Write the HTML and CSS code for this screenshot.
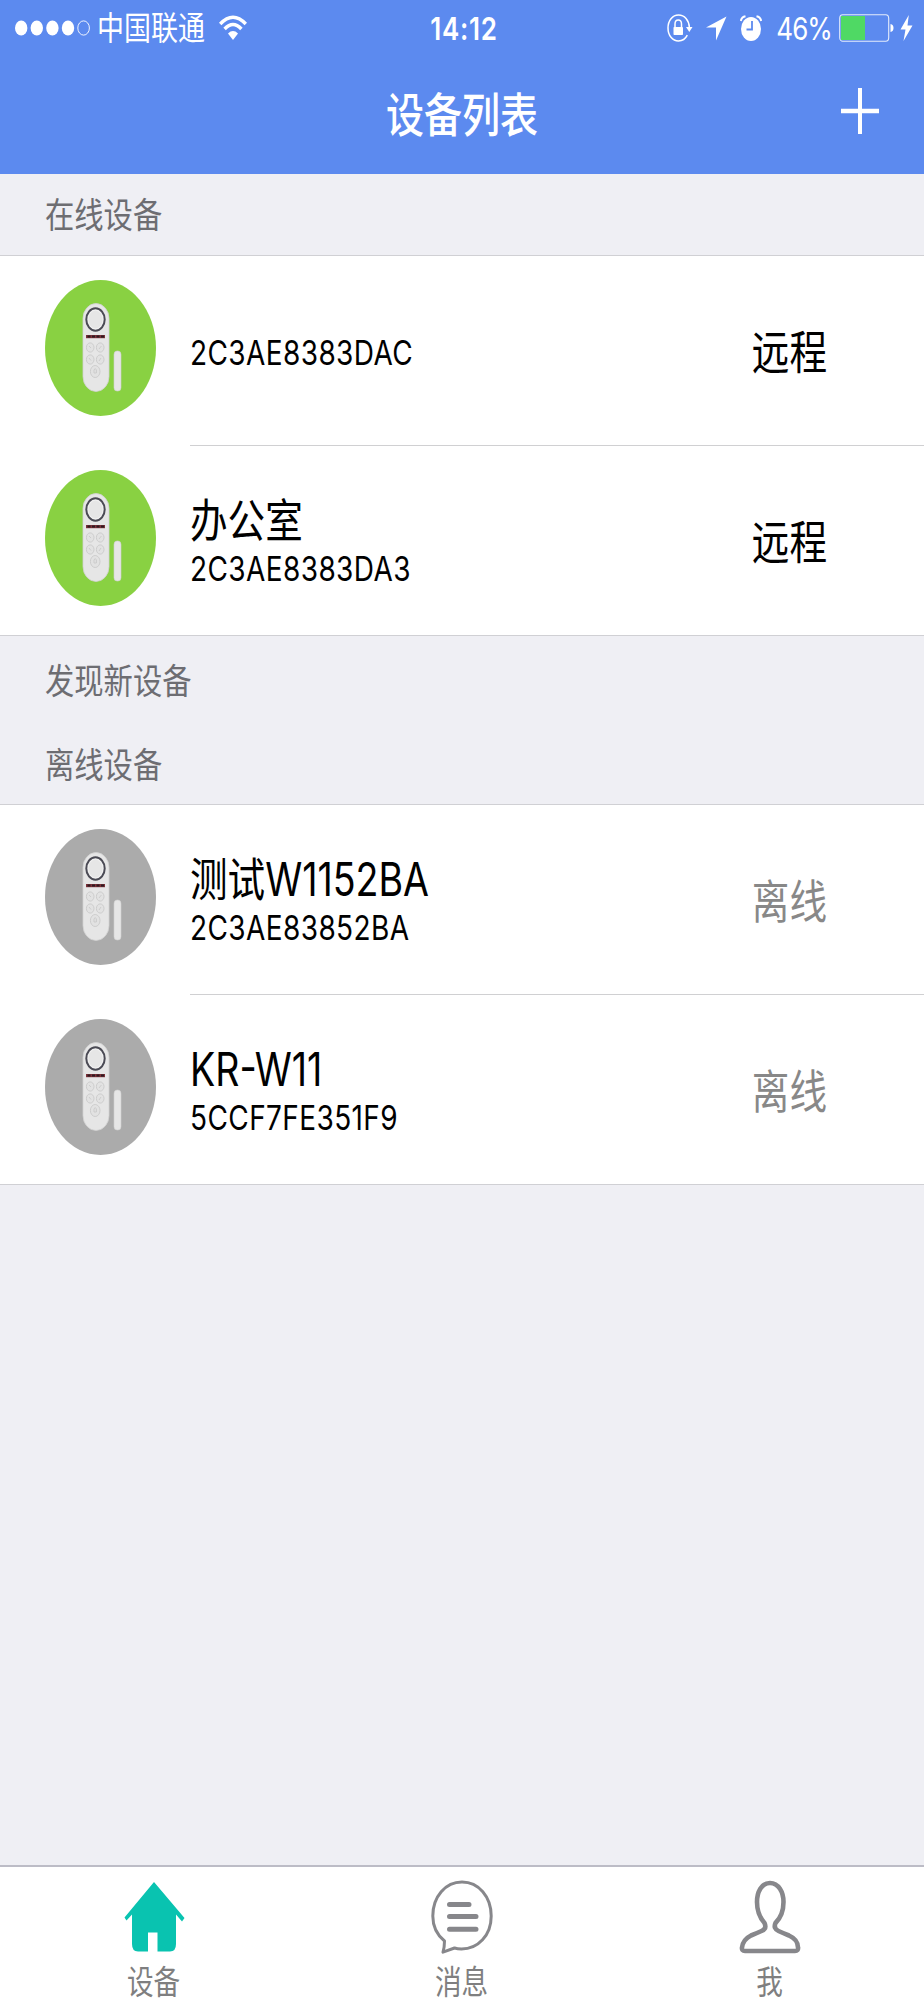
FILE: index.html
```html
<!DOCTYPE html>
<html lang="zh-CN">

<head>
  <meta charset="UTF-8">
  <meta name="viewport" content="width=device-width, initial-scale=1.0">
  <title>设备列表</title>
  <link rel="stylesheet" href="styles.css">
</head>

<body>
  <!-- device picture, used by every row -->
  <svg class="defs" width="0" height="0">
    <symbol id="device" viewBox="0 0 111 136">
      <ellipse cx="55.5" cy="68" rx="55.5" ry="68" fill="currentColor" />
      <rect x="38" y="23.5" width="26" height="88" rx="13" ry="15" fill="#e6e6e6" stroke="#d2d2d2" stroke-width="0.8" />
      <ellipse cx="50.5" cy="39.5" rx="9.2" ry="11.2" fill="#f1f1f1" stroke="#4b4b55" stroke-width="2" />
      <ellipse cx="50.5" cy="39.5" rx="7" ry="9" fill="#e6e6e6" />
      <rect x="41" y="55" width="19" height="3.2" fill="#7b3038" />
      <path d="M42.5 56.6H59" stroke="#2c1a20" stroke-width="2" stroke-dasharray="3 1.5" />
      <g fill="#e2e2e2" stroke="#cacaca" stroke-width="0.9">
        <ellipse cx="45.2" cy="67.5" rx="3.8" ry="4.6" />
        <ellipse cx="55.2" cy="67.5" rx="3.8" ry="4.6" />
        <ellipse cx="45.2" cy="79.5" rx="3.8" ry="4.6" />
        <ellipse cx="55.2" cy="79.5" rx="3.8" ry="4.6" />
        <ellipse cx="50.2" cy="91.5" rx="4.8" ry="6" />
        <path d="M44 66l2 2M54 69l2.400-3M44 78l2 2.500M54 81l2-3M49 93v-3l1.200-1.500 1.200 1.500v3z" />
      </g>
      <rect x="69" y="71" width="7" height="40" rx="3" ry="3.500" fill="#e6e6e6" stroke="#d0d0d0" stroke-width="0.6" />
    </symbol>
  </svg>

  <div class="app">
    <header>
      <div class="statusbar">
        <div class="left">
          <svg class="signal" width="79" height="20" viewBox="0 0 79 20">
            <g fill="#fff">
              <ellipse cx="6.200" cy="10" rx="6.200" ry="7.500" />
              <ellipse cx="21.800" cy="10" rx="6.200" ry="7.500" />
              <ellipse cx="37.400" cy="10" rx="6.200" ry="7.500" />
              <ellipse cx="53" cy="10" rx="6.200" ry="7.500" />
            </g>
            <ellipse cx="68.600" cy="10" rx="5.800" ry="7.100" fill="none" stroke="#fff" stroke-width="0.9" />
          </svg>
          <span class="text carrier">中国联通</span>
          <svg class="wifi" width="28" height="26" viewBox="0 0 28 26">
            <g fill="none" stroke="#fff" stroke-width="3.400">
              <path d="M1.200 9Q14 -4.500 26.800 9" />
              <path d="M5.600 14Q14 5 22.400 14" />
            </g>
            <path d="M9 18.400Q14 13.500 19 18.400L14 25z" fill="#fff" />
          </svg>
        </div>
        <span class="text time">14:12</span>
        <div class="right">
          <svg class="lock" width="26" height="28" viewBox="0 0 26 28">
            <path d="M22.400 13.500C22 6 17.500 1 11.500 1C5.500 1 1 6.500 1 14C1 21.500 5.500 27 11.500 27C15.500 27 18.500 24.800 20.300 21.200" fill="none" stroke="#fff" stroke-width="1.500" />
            <path d="M19 13h6.500l-3.200 5z" fill="#fff" />
            <rect x="6.500" y="13" width="9.500" height="8" rx="0.800" fill="#fff" />
            <path d="M8 13V10Q8 6 11.200 6Q14.500 6 14.500 10V13" fill="none" stroke="#fff" stroke-width="1.500" />
          </svg>
          <svg class="arrow" width="21" height="25" viewBox="0 0 21 25">
            <path d="M20.500 0.500L0 11.500H10V24.500z" fill="#fff" />
          </svg>
          <svg class="alarm" width="22" height="27" viewBox="0 0 22 27">
            <ellipse cx="11" cy="14" rx="10" ry="12" fill="#fff" />
            <path d="M0.800 6Q1.500 2 5.500 1.200M21.200 6Q20.500 2 16.500 1.200" fill="none" stroke="#fff" stroke-width="2" />
            <path d="M12 6V14.500H6.500" fill="none" stroke="#5c8aef" stroke-width="1.800" />
          </svg>
          <span class="text percent">46%</span>
          <svg class="battery" width="55" height="28" viewBox="0 0 55 28">
            <path d="M2 2H26V26H2z" fill="#4fd964" />
            <rect x="0.700" y="0.700" width="49" height="26.600" rx="3" ry="3.800" fill="none" stroke="#e4ecfc" stroke-width="1.100" />
            <path d="M51.500 10Q54.500 10.500 54.500 14Q54.500 17.500 51.500 18z" fill="#fff" />
          </svg>
          <svg class="bolt" width="13" height="27" viewBox="0 0 13 27">
            <path d="M8.800 0L0.500 14.500H5.500L3.500 26L12.500 10.500H7.500z" fill="#fff" />
          </svg>
        </div>
      </div>
      <div class="navbar">
        <h1 class="text">设备列表</h1>
        <svg class="add" width="38" height="46" viewBox="0 0 38 46">
          <path d="M19 0V46" stroke="#fff" stroke-width="4" />
          <path d="M0 23H38" stroke="#fff" stroke-width="4.600" />
        </svg>
      </div>
    </header>

    <main>
      <h2><span class="text">在线设备</span></h2>
      <ul>
        <li>
          <svg class="photo online"><use href="#device" /></svg>
          <div class="row">
            <div class="info">
              <span class="text mac">2C3AE8383DAC</span>
            </div>
            <span class="text state">远程</span>
          </div>
        </li>
        <li>
          <svg class="photo online"><use href="#device" /></svg>
          <div class="row">
            <div class="info">
              <span class="text name">办公室</span>
              <span class="text mac">2C3AE8383DA3</span>
            </div>
            <span class="text state">远程</span>
          </div>
        </li>
      </ul>

      <h2 class="new"><span class="text">发现新设备</span></h2>

      <h2 class="off"><span class="text">离线设备</span></h2>
      <ul>
        <li>
          <svg class="photo"><use href="#device" /></svg>
          <div class="row">
            <div class="info">
              <span class="text name">测试W1152BA</span>
              <span class="text mac">2C3AE83852BA</span>
            </div>
            <span class="text state offline">离线</span>
          </div>
        </li>
        <li>
          <svg class="photo"><use href="#device" /></svg>
          <div class="row">
            <div class="info">
              <span class="text name">KR-W11</span>
              <span class="text mac">5CCF7FE351F9</span>
            </div>
            <span class="text state offline">离线</span>
          </div>
        </li>
      </ul>
    </main>

    <nav>
      <a class="tab">
        <svg width="62" height="74" viewBox="0 0 62 74">
          <path d="M31 2L61.500 38L59 41.500L53 34.500V64Q53 71.500 47 71.500H34.500V52.500H25V71.500H15Q9 71.500 9 64V34.500L3.500 40.500L1.500 37.500z" fill="#09c3b0" />
        </svg>
        <span class="text">设备</span>
      </a>
      <a class="tab">
        <svg width="62" height="74" viewBox="0 0 62 74">
          <path d="M13.500 61C5.500 54.500 1.800 46 1.800 36C1.800 16.500 14.500 2 31 2C47.500 2 60.200 16.500 60.200 36C60.200 55.500 47 69 30.500 69Q26.500 69 23.500 68L12 72.200Q13.500 67 13.500 61z" fill="none" stroke="#87878b" stroke-width="3" stroke-linejoin="round" />
          <path d="M18.500 24.500H38M18.500 36.500H45M18.500 49.200H45" stroke="#87878b" stroke-width="5" stroke-linecap="round" />
        </svg>
        <span class="text">消息</span>
      </a>
      <a class="tab">
        <svg width="62" height="74" viewBox="0 0 62 74">
          <path d="M31 3C22.500 3 18 12 18 22C18 31 21.500 38.500 25.500 43Q28 48.500 22.500 51Q17 53.500 12 55.500Q4 59.500 3 67.500Q2.500 71 6 71H56Q59.500 71 59 67.500Q59 59.500 50 55.500Q45 53.500 39.500 51Q34 48.500 36.500 43C41 38.500 44.500 31 44.500 22C44.500 12 39.500 3 31 3z" fill="none" stroke="#87878b" stroke-width="4.600" stroke-linejoin="round" />
        </svg>
        <span class="text">我</span>
      </a>
    </nav>
  </div>
</body>

</html>
```

FILE: styles.css
```css
* {
  box-sizing: border-box;
}

body {
  margin: 0;
  font-family: Inter, "Noto Sans CJK SC", sans-serif;
  background-color: #efeff4;
  color: #000;
}

svg {
  display: block;
  flex-shrink: 0;
}

.defs {
  position: absolute;
}

.app {
  display: flex;
  flex-direction: column;
  height: 2000px;
}

/* tall, narrow lettering */
.text {
  display: block;
  white-space: nowrap;
  transform: scaleY(1.22);
}

header {
  height: 174px;
  background-color: #5c8aef;
  color: #fff;
}

.statusbar {
  display: grid;
  grid-template-columns: 1fr auto 1fr;
  align-items: center;
  height: 56px;
  padding: 0 11px 0 15px;
}

.left,
.right {
  display: flex;
  align-items: center;
}

.right {
  justify-content: flex-end;
}

.carrier {
  margin-top: 2px;
  margin-left: 3px;
  font-size: 27px;
  line-height: 30px;
}

.wifi {
  margin-left: 14px;
}

.time {
  margin-top: 2px;
  font-size: 26px;
  font-weight: 600;
  line-height: 30px;
  letter-spacing: 0.7px;
}

.arrow {
  margin-left: 13px;
}

.alarm {
  margin-left: 13px;
}

.percent {
  margin-top: 2px;
  margin-left: 14px;
  font-size: 26px;
  line-height: 30px;
  letter-spacing: -0.9px;
}

.battery {
  margin-left: 7px;
}

.bolt {
  margin-left: 6px;
}

.navbar {
  display: grid;
  grid-template-columns: 1fr auto 1fr;
  align-items: center;
  height: 110px;
  padding-right: 45px;
  padding-left: 45px;
}

h1 {
  grid-column: 2;
  margin: 7px 0 0;
  font-size: 38px;
  font-weight: 500;
  line-height: 46px;
}

.add {
  justify-self: end;
}

h2 {
  display: flex;
  align-items: center;
  height: 81px;
  margin: 0;
  padding-top: 3px;
  padding-left: 45px;
  font-size: 29.3px;
  font-weight: 400;
  line-height: 36px;
  color: #6d6d72;
}

.new {
  height: 89px;
}

.off {
  height: 79px;
}

ul {
  margin: 0;
  padding: 0;
  list-style: none;
  background-color: #fff;
  border-top: 1px solid #d0d0d4;
  border-bottom: 1px solid #d0d0d4;
}

li {
  display: flex;
  height: 190px;
  padding-left: 45px;
}

li:last-child {
  height: 189px;
}

.photo {
  width: 111px;
  height: 136px;
  margin-top: 24px;
  margin-right: 34px;
  color: #ababab;
}

.online {
  color: #89d142;
}

.row {
  display: flex;
  flex: 1;
  align-items: center;
  justify-content: space-between;
  padding-top: 2px;
  padding-right: 97px;
}

li:first-child .row {
  border-bottom: 1px solid #d0d0d2;
}

.name {
  font-size: 37.6px;
  line-height: 54px;
}

.mac {
  font-size: 28px;
  line-height: 42px;
  letter-spacing: 0.4px;
}

.mac:only-child {
  padding-top: 2px;
}

.state {
  padding-top: 2px;
  font-size: 37.6px;
  line-height: 46px;
}

.offline {
  color: #888;
}

nav {
  display: flex;
  height: 135px;
  margin-top: auto;
  background-color: #fff;
  border-top: 2px solid #bcbcc6;
}

.tab {
  display: flex;
  flex: 1;
  flex-direction: column;
  align-items: center;
  padding-top: 13px;
  padding-right: 1px;
  font-size: 26.6px;
  line-height: 32px;
  color: #7f7f80;
}

.tab .text {
  margin-top: 12px;
}
```
